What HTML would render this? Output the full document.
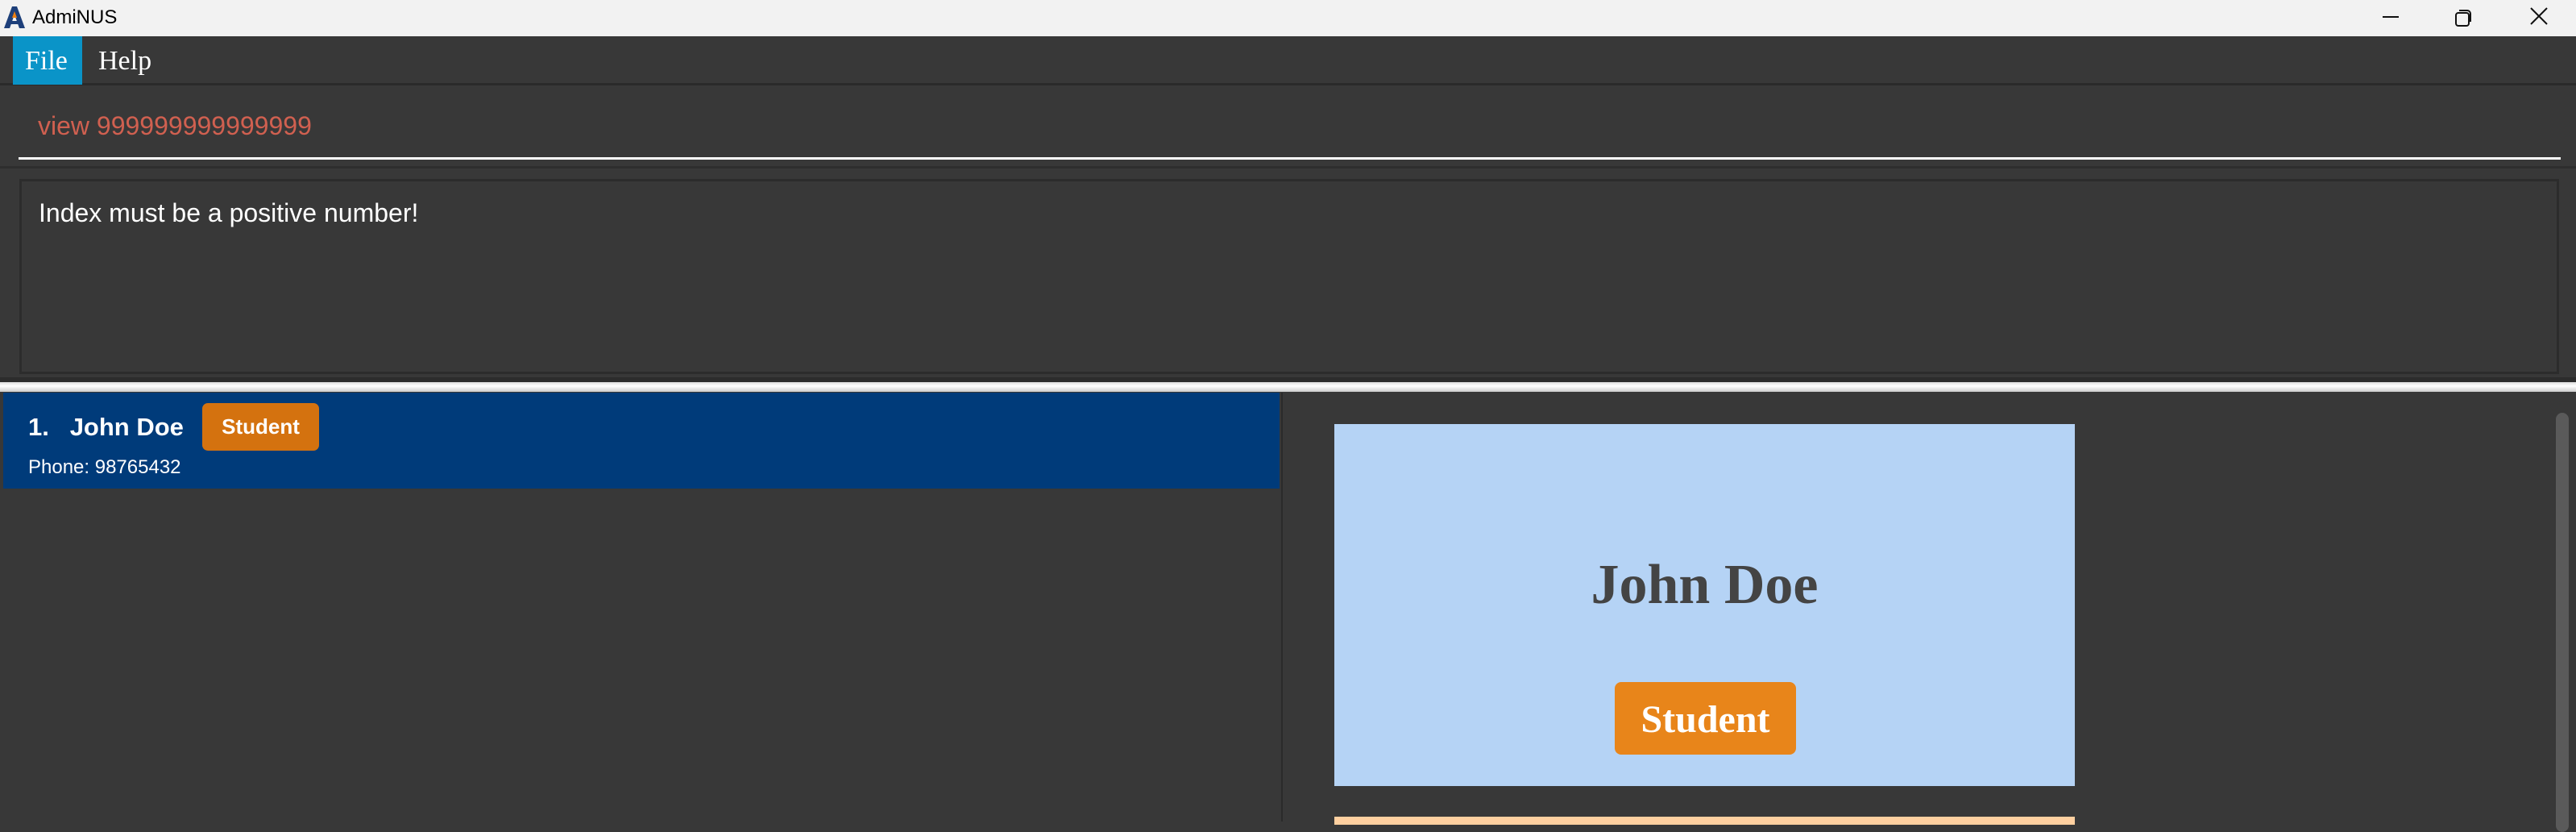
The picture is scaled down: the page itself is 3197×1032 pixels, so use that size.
<!DOCTYPE html>
<html><head><meta charset="utf-8"><style>
*{margin:0;padding:0;box-sizing:border-box}
body{width:3197px;height:1019px;background:#383838;position:relative;overflow:hidden;font-family:"Liberation Sans",sans-serif}
.a{position:absolute}
</style></head><body>
<div class="a" style="left:0;top:0;width:3197px;height:45px;background:#f2f2f2"></div>
<svg class="a" style="left:3px;top:6px" width="30" height="30" viewBox="0 0 30 30"><path d="M2 29 L12 2 L18 2 L28 29 L21 29 L15 12 L9 29Z" fill="#1d3f7a"/><path d="M12 16 L15 8 L18 16Z" fill="#f08010"/><rect x="9" y="20" width="12" height="4" fill="#1d3f7a"/></svg>
<div class="a" style="left:40px;top:8px;font-size:24px;color:#000">AdmiNUS</div>
<svg class="a" style="left:2950px;top:8px" width="220" height="28"><line x1="7" y1="13" x2="27" y2="13" stroke="#111" stroke-width="2"/><rect x="98" y="8" width="16" height="16" rx="3" fill="none" stroke="#111" stroke-width="2"/><path d="M102 5 h10 a4 4 0 0 1 4 4 v10" fill="none" stroke="#111" stroke-width="2"/><path d="M191 2 L211 22 M211 2 L191 22" stroke="#111" stroke-width="2"/></svg>
<div class="a" style="left:0;top:45px;width:3197px;height:61px;background:#383838;border-bottom:3px solid #2a2a2a"></div>
<div class="a" style="left:16px;top:45px;width:86px;height:60px;background:#0a94c8"></div>
<div class="a" style="left:31px;top:57px;font-family:'Liberation Serif',serif;font-size:34px;color:#fff">File</div>
<div class="a" style="left:122px;top:57px;font-family:'Liberation Serif',serif;font-size:34px;color:#fff">Help</div>
<div class="a" style="left:47px;top:138px;font-size:32px;color:#d06050">view 999999999999999</div>
<div class="a" style="left:23px;top:195px;width:3155px;height:3px;background:#fff"></div>
<div class="a" style="left:0;top:206px;width:3197px;height:3px;background:#2e2e2e"></div>
<div class="a" style="left:24px;top:222px;width:3152px;height:242px;border:3px solid #2c2c2c"></div>
<div class="a" style="left:48px;top:246px;font-size:32px;color:#fff">Index must be a positive number!</div>
<div class="a" style="left:0;top:468px;width:3197px;height:6px;background:#2c2c2c"></div>
<div class="a" style="left:0;top:474px;width:3197px;height:12px;background:linear-gradient(#ddd,#fff 40%,#ccc)"></div>
<div class="a" style="left:4px;top:487px;width:1584px;height:119px;background:#003b7a"></div>
<div class="a" style="left:35px;top:512px;font-size:31px;font-weight:bold;color:#fff">1.&nbsp;&nbsp;&nbsp;John Doe</div>
<div class="a" style="left:251px;top:500px;width:145px;height:59px;background:#d4720f;border-radius:7px;color:#fff;font-weight:bold;font-size:26px;text-align:center;line-height:59px">Student</div>
<div class="a" style="left:35px;top:566px;font-size:24px;color:#fff">Phone: 98765432</div>
<div class="a" style="left:1590px;top:487px;width:2px;height:532px;background:#2a2a2a"></div>
<div class="a" style="left:1656px;top:526px;width:919px;height:449px;background:#b5d3f5"></div>
<div class="a" style="left:1656px;top:686px;width:919px;text-align:center;font-family:'Liberation Serif',serif;font-weight:bold;font-size:70px;color:#444">John Doe</div>
<div class="a" style="left:2004px;top:846px;width:225px;height:90px;background:#e8851a;border-radius:8px;color:#fff;font-family:'Liberation Serif',serif;font-weight:bold;font-size:48px;text-align:center;line-height:94px">Student</div>
<div class="a" style="left:1656px;top:1013px;width:919px;height:10px;background:#ffd0a0"></div>
<div class="a" style="left:3172px;top:512px;width:16px;height:520px;background:#5a5a5a;border-radius:8px"></div>
</body></html>
